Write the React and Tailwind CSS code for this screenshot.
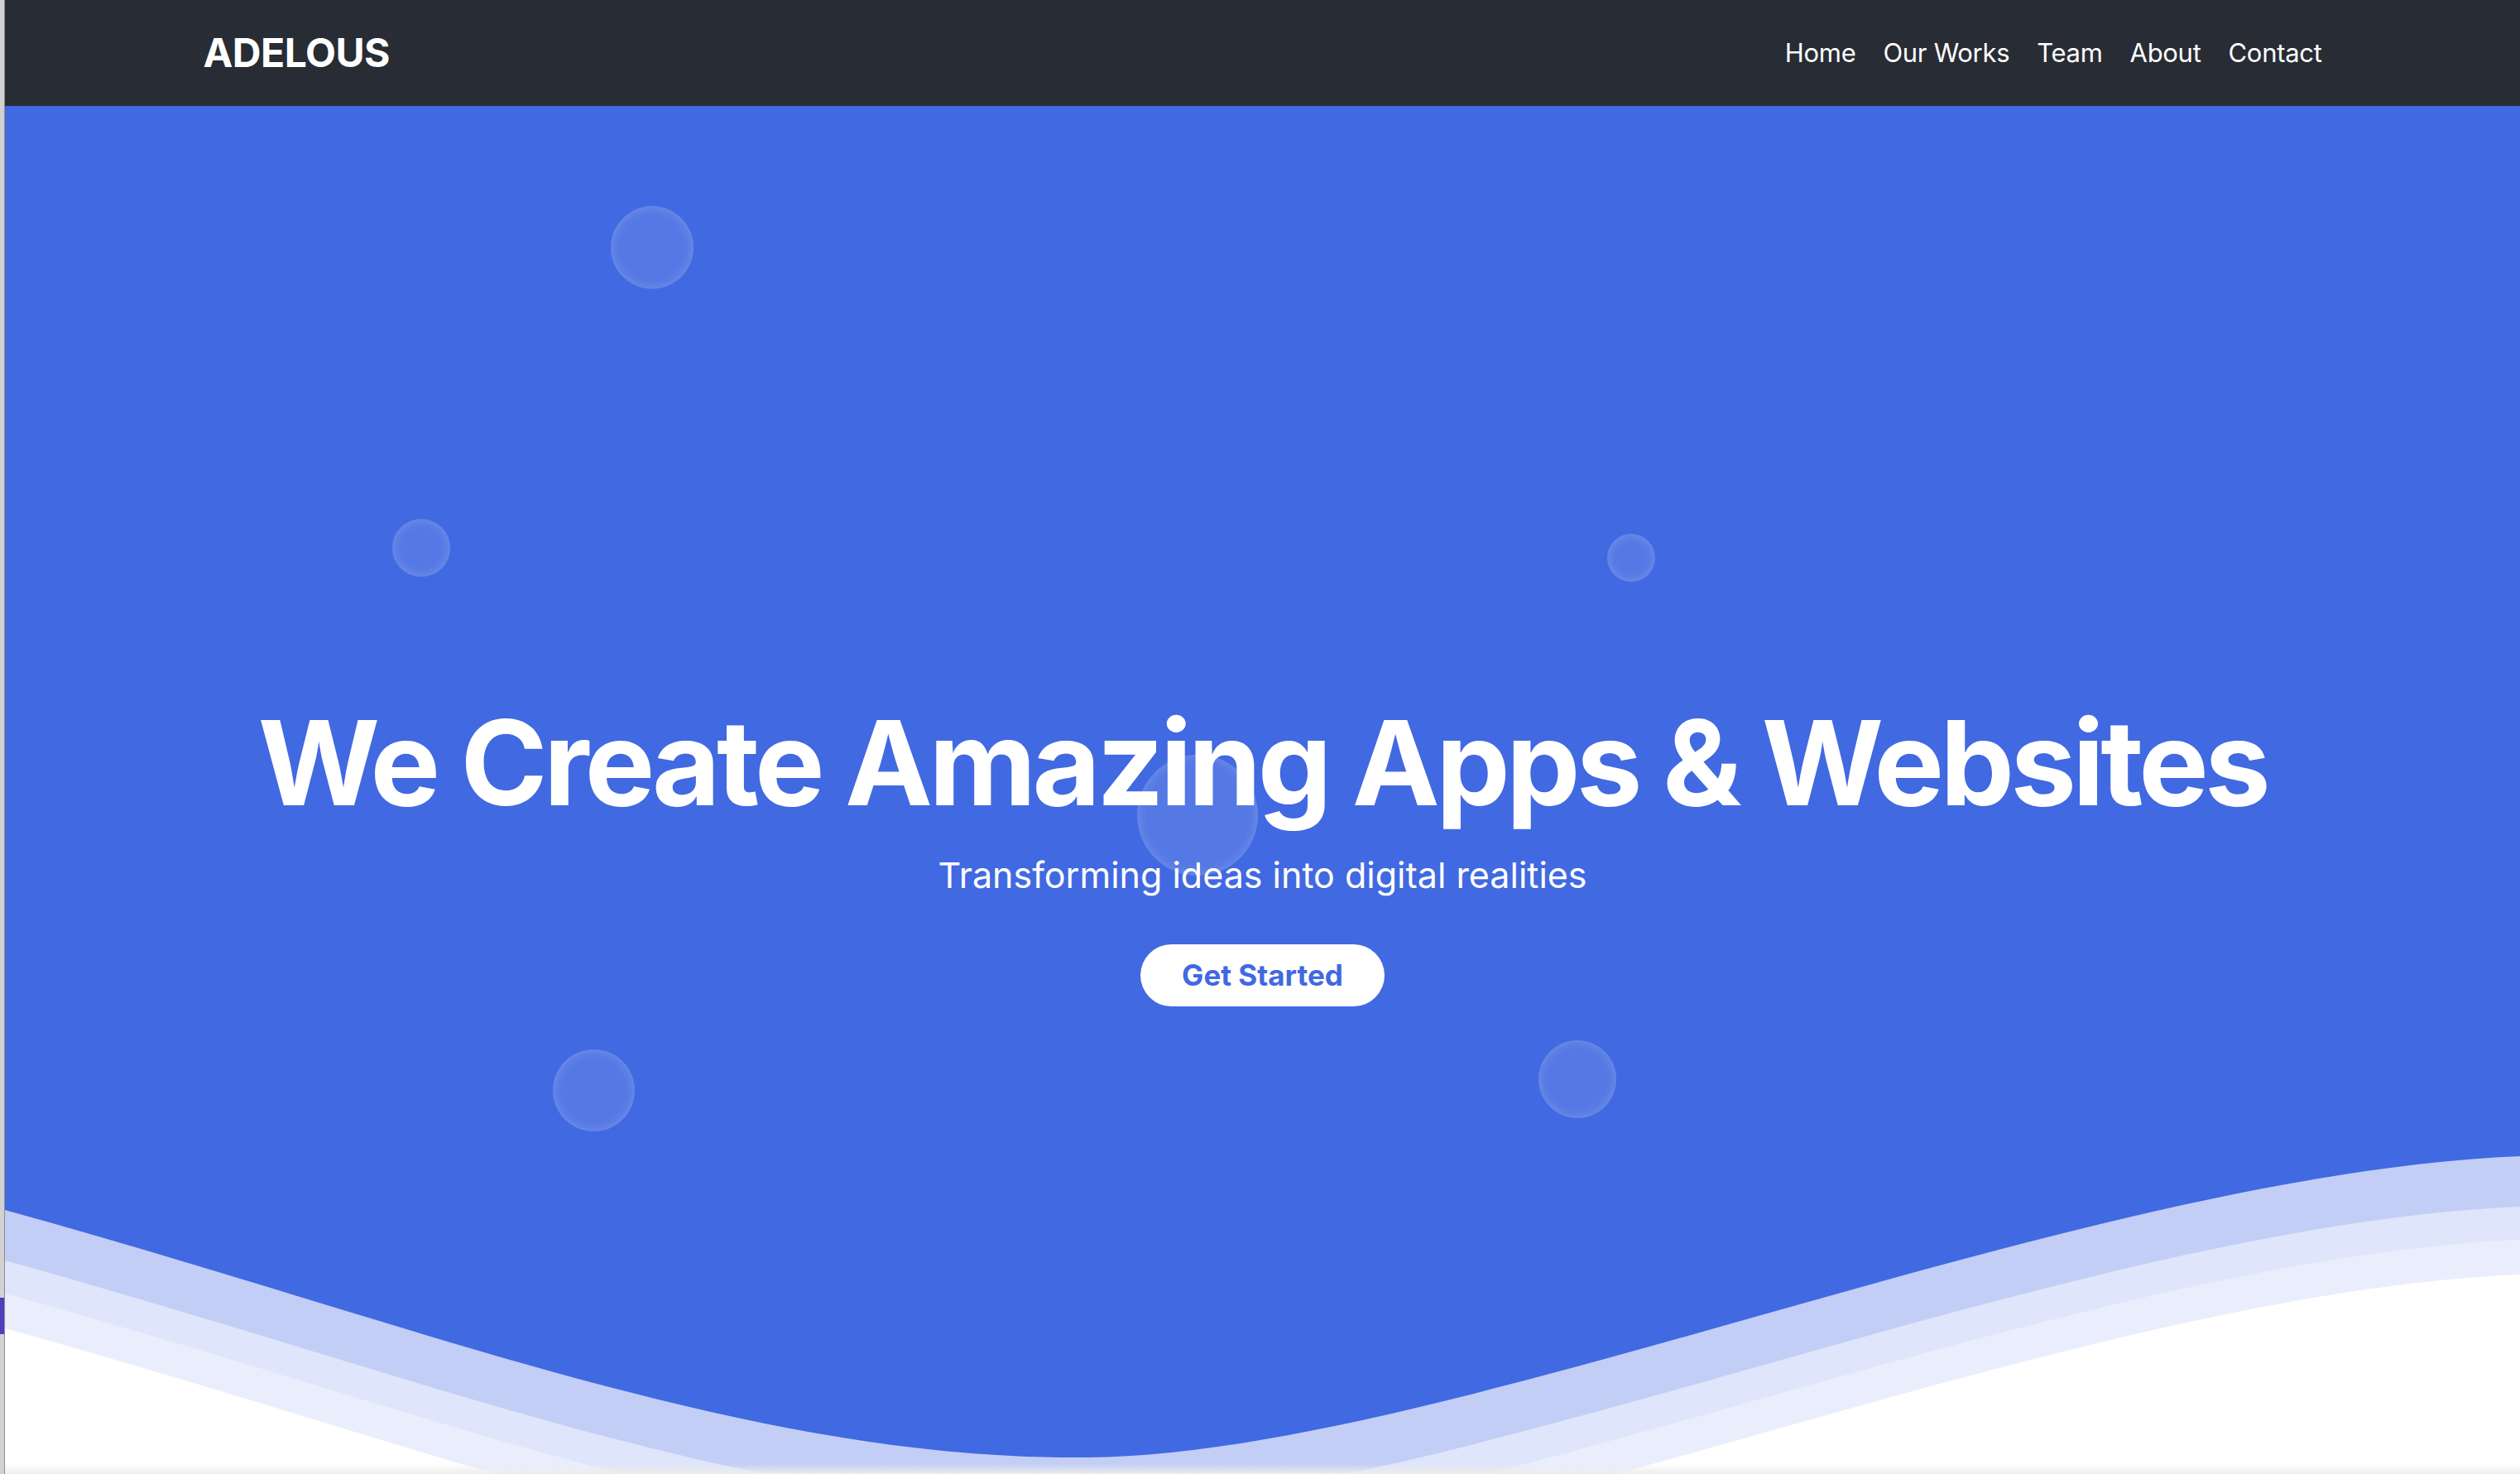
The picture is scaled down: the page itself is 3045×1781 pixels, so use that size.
import React from 'react';

const navLinks = ['Home', 'Our Works', 'Team', 'About', 'Contact'];

// hero-relative positions of the floating bubbles
const bubbles = [
  { left: 732, top: 121, size: 100 },
  { left: 468, top: 499, size: 70 },
  { left: 1936, top: 517, size: 58 },
  { left: 1368, top: 784, size: 146 },
  { left: 662, top: 1140, size: 99 },
  { left: 1853, top: 1129, size: 94 },
];

const wave = (dy) =>
  `M6,${1462 + dy} C506,${1600 + dy} 906,${1765 + dy} 1313,${1761 + dy} C1750,${1757 + dy} 2500,${1420 + dy} 3045,${1397 + dy} L3045,1800 L6,1800 Z`;

const Bubble = ({ left, top, size }) => (
  <div
    className="absolute rounded-full bg-white/10 shadow-[inset_0_0_14px_rgba(255,255,255,0.22)]"
    style={{ left, top, width: size, height: size }}
  />
);

const App = () => {
  return (
    <div className="flex min-h-screen font-['Inter','Liberation_Sans',sans-serif]">
      <div className="w-[6px] shrink-0 bg-[#d2d2d2] border-r border-[#8d8d8d] flex flex-col">
        <div className="mt-[1568px] h-[44px] bg-[#4f3dbd]" />
      </div>

      <div className="flex-1 flex flex-col">
        <nav className="h-[128px] bg-[#282c34] shrink-0">
          <div className="max-w-[2560px] h-full mx-auto flex items-center justify-between">
            <a className="text-white text-[48px] font-bold tracking-[-0.5px]">ADELOUS</a>
            <ul className="flex items-center gap-[33px]">
              {navLinks.map(link => (
                <li key={link} className="text-white text-[31px] tracking-[-0.3px]">{link}</li>
              ))}
            </ul>
          </div>
        </nav>

        <section className="relative h-[1653px] bg-[#4169e1] overflow-hidden flex flex-col items-center pt-[722px]">
          {bubbles.map((b, i) => (
            <Bubble key={i} {...b} />
          ))}

          <h1 className="relative text-white text-[142px] font-bold leading-none tracking-[-4.6px]">
            We Create Amazing Apps &amp; Websites
          </h1>
          <p className="relative mt-[40px] text-white text-[43px] leading-[1.2]">
            Transforming ideas into digital realities
          </p>
          <button className="relative mt-[57px] h-[75px] px-[50px] rounded-full bg-white text-[#4169e1] text-[35px] font-bold">
            Get Started
          </button>

          <svg
            className="absolute left-0 top-0 w-full h-full"
            viewBox="6 128 3039 1653"
            preserveAspectRatio="none"
          >
            <path d={wave(0)} fill="#c2cef5" />
            <path d={wave(61)} fill="#dfe5fa" />
            <path d={wave(101)} fill="#eaeefc" />
            <path d={wave(143)} fill="#ffffff" />
          </svg>
          <div className="absolute left-0 right-0 bottom-0 h-[12px] bg-gradient-to-b from-transparent to-[#ededed]" />
        </section>
      </div>
    </div>
  );
};

export default App;
